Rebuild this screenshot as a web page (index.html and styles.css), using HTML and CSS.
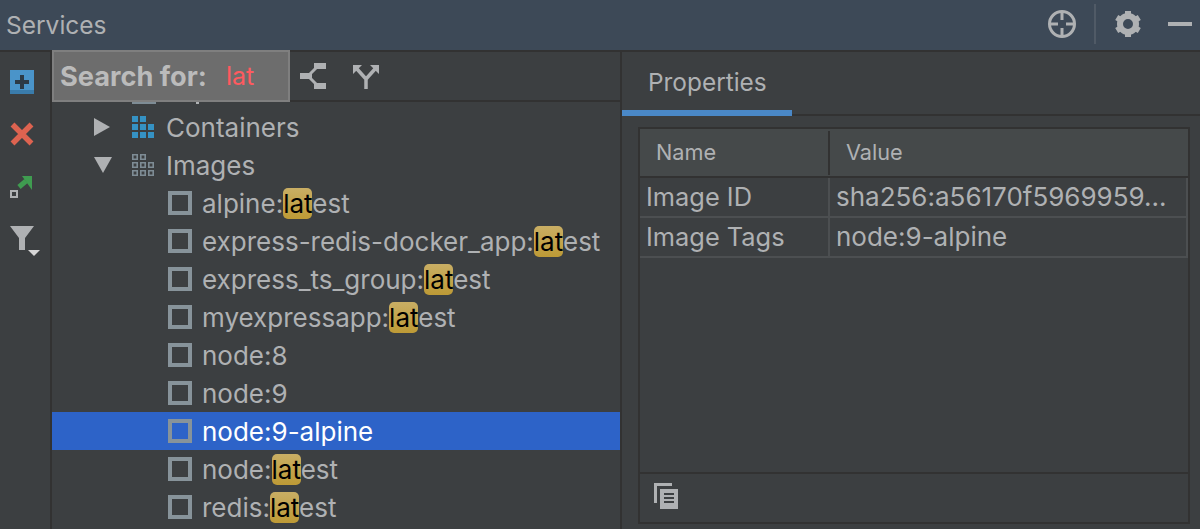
FILE: index.html
```html
<!DOCTYPE html>
<html lang="en">
<head>
<meta charset="utf-8">
<title>Services</title>
<link rel="stylesheet" href="styles.css">
</head>
<body>
<div class="app">
  <header class="titlebar">
    <span class="title">Services</span>
    <div class="title-actions">
      <svg class="ic-target" width="28" height="28" viewBox="0 0 28 28"><circle cx="14" cy="14" r="12.5" fill="none" stroke="#afb1b3" stroke-width="3"/><path d="M14 3v7M14 18v7M3 14h7M18 14h7" stroke="#afb1b3" stroke-width="3" fill="none"/></svg>
      <span class="vsep"></span>
      <svg class="ic-gear" width="26" height="28" viewBox="0 0 26 28"><circle cx="13" cy="14" r="8" fill="none" stroke="#afb1b3" stroke-width="6"/><g stroke="#afb1b3" stroke-width="6"><path d="M13 1v5M13 22v5"/><path d="M1.7 7.5l4.3 2.5M20 18l4.300 2.500"/><path d="M24.300 7.500L20 10M6 18l-4.300 2.500"/></g></svg>
      <span class="minimize"></span>
    </div>
  </header>
  <div class="main">
    <aside class="sidebar">
      <svg class="ic-add" width="24" height="24" viewBox="0 0 24 24"><rect width="24" height="24" fill="#4a94c9"/><rect y="20" width="24" height="4" fill="#3a7cab"/><path d="M12 5v14M5 12h14" stroke="#2c3a46" stroke-width="4"/></svg>
      <svg class="ic-remove" width="24" height="24" viewBox="0 0 24 24"><path d="M2.500 2.500l19 19M21.500 2.500l-19 19" stroke="#dd6350" stroke-width="5.500"/></svg>
      <svg class="ic-open" width="24" height="24" viewBox="0 0 24 24"><rect x="1" y="15" width="6" height="6" fill="none" stroke="#afb1b3" stroke-width="2"/><path d="M9 11l7-6" stroke="#3f9c50" stroke-width="5"/><path d="M12 0h10v14z" fill="#3f9c50"/></svg>
      <svg class="ic-filter" width="30" height="30" viewBox="0 0 30 30"><path d="M0 0h24L15 12v12H9V12z" fill="#afb1b3"/><path d="M18 24h12l-6 6z" fill="#d6d6d6"/></svg>
    </aside>
    <section class="tree-pane">
      <div class="tree-toolbar">
        <svg class="ic-collapse" width="26" height="26" viewBox="0 0 26 26"><path d="M18 3l-8 8M18 23l-8-8" fill="none" stroke="#afb1b3" stroke-width="3"/><path d="M14 0h12v6H14zM14 20h12v6H14zM0 10h12v6H0z" fill="#afb1b3"/></svg>
        <svg class="ic-expand" width="26" height="26" viewBox="0 0 26 26"><path d="M4 6l9 10v10M22 6l-9 10" fill="none" stroke="#afb1b3" stroke-width="3.500"/><path d="M0 2h9L0 11zM26 2h-9l9 9z" fill="#afb1b3"/></svg>
      </div>
      <div class="search-popup"><span class="search-label">Search for:</span><span class="search-query">lat</span></div>
      <div class="tree">
        <div class="row row-stub"><span class="stub-box"></span><span class="stub-tail"></span></div>
        <div class="row row-group">
          <span class="arrow arrow-right"></span>
          <svg class="ic-grid" width="22" height="22" viewBox="0 0 22 22"><path fill="#3592c4" d="M0 0h6v6H0zM8 0h6v6H8zM0 8h6v6H0zM8 8h6v6H8zM16 8h6v6h-6zM0 16h6v6H0zM8 16h6v6H8zM16 16h6v6h-6z"/></svg>
          <span class="label">Containers</span>
        </div>
        <div class="row row-group">
          <span class="arrow arrow-down"></span>
          <svg class="ic-grid" width="22" height="22" viewBox="0 0 22 22"><g fill="none" stroke="#7e8c95" stroke-width="1.600"><path d="M.8.8h4.400v4.400H.8zM8.800.8h4.400v4.400H8.800zM.8 8.800h4.400v4.400H.8zM8.800 8.800h4.400v4.400H8.800zM16.800 8.800h4.400v4.400h-4.400zM.8 16.800h4.400v4.400H.8zM8.800 16.800h4.400v4.400H8.800zM16.800 16.800h4.400v4.400h-4.400z"/></g></svg>
          <span class="label">Images</span>
        </div>
        <div class="row row-leaf"><span class="box"></span><span class="label">alpine:<mark>lat</mark>est</span></div>
        <div class="row row-leaf"><span class="box"></span><span class="label">express-redis-docker_app:<mark>lat</mark>est</span></div>
        <div class="row row-leaf"><span class="box"></span><span class="label">express_ts_group:<mark>lat</mark>est</span></div>
        <div class="row row-leaf"><span class="box"></span><span class="label">myexpressapp:<mark>lat</mark>est</span></div>
        <div class="row row-leaf"><span class="box"></span><span class="label">node:8</span></div>
        <div class="row row-leaf"><span class="box"></span><span class="label">node:9</span></div>
        <div class="row row-leaf selected"><span class="box"></span><span class="label">node:9-alpine</span></div>
        <div class="row row-leaf"><span class="box"></span><span class="label">node:<mark>lat</mark>est</span></div>
        <div class="row row-leaf"><span class="box"></span><span class="label">redis:<mark>lat</mark>est</span></div>
      </div>
    </section>
    <section class="details">
      <div class="tabs"><div class="tab">Properties</div></div>
      <div class="table">
        <div class="thead"><div class="th th-name">Name</div><div class="th th-value">Value</div></div>
        <div class="tr"><div class="td td-name">Image ID</div><div class="td td-value">sha256:a56170f5969959...</div></div>
        <div class="tr"><div class="td td-name">Image Tags</div><div class="td td-value">node:9-alpine</div></div>
        <div class="table-space"></div>
        <div class="table-foot">
          <svg width="24" height="26" viewBox="0 0 24 26"><path fill="#afb1b3" d="M0 0h18v3H3v17H0z"/><path fill="#afb1b3" d="M6 6h18v20H6z"/><path d="M10 10h10v2H10zM10 14h10v2H10zM10 18h10v2H10z" fill="#3c3f41"/></svg>
        </div>
      </div>
    </section>
  </div>
</div>
</body>
</html>
```
FILE: styles.css
```css
* { box-sizing: border-box; }
html, body { margin: 0; height: 100%; overflow: hidden; }
body { background: #3c3f41; color: #afb1b3; font-family: Inter, "Liberation Sans", sans-serif; font-size: 26px; }
.app { width: 1200px; height: 529px; display: flex; flex-direction: column; overflow: hidden; }
.titlebar { height: 52px; flex: none; background: #3d4957; border-bottom: 2px solid #323232; display: flex; align-items: center; justify-content: space-between; padding: 0 8px 2px 6px; }
.title { font-size: 24.500px; color: #afb1b3; margin-top: 2px; }
.title-actions { display: flex; align-items: center; }
.ic-target { margin-right: 18px; }
.vsep { width: 2px; height: 40px; background: #505a66; margin-right: 19px; }
.ic-gear { margin-right: 27px; }
.minimize { width: 24px; height: 4px; background: #afb1b3; }
.main { flex: 1; display: flex; min-height: 0; }
.sidebar { width: 52px; flex: none; border-right: 2px solid #323232; display: flex; flex-direction: column; align-items: flex-start; padding: 18px 0 0 10px; }
.ic-remove { margin-top: 28px; }
.ic-open { margin-top: 30px; }
.ic-filter { margin-top: 26px; }
.tree-pane { width: 570px; flex: none; border-right: 2px solid #323232; position: relative; display: flex; flex-direction: column; }
.tree-toolbar { height: 50px; flex: none; border-bottom: 2px solid #323232; display: flex; align-items: center; padding-left: 248px; gap: 27px; }
.search-popup { position: absolute; left: 0; top: -2px; width: 238px; height: 52px; background: #6d6d6d; border: 2px solid #7f7f7f; display: flex; align-items: center; padding-left: 6px; }
.search-label { font-weight: 700; font-size: 27.200px; color: #bbbbbb; width: 166px; flex: none; white-space: nowrap; }
.search-query { color: #ff5a5f; font-size: 25px; }
.tree { flex: 1; overflow: hidden; min-height: 0; }
.row { height: 38px; display: flex; align-items: center; white-space: nowrap; }
.row-stub { margin-top: -32px; padding: 0 0 4px 80px; align-items: flex-end; }
.stub-box { width: 24px; height: 24px; background: #7e8c95; margin-right: 40px; }
.stub-tail { width: 3px; height: 3px; background: #afb1b3; }
.row-group { padding-left: 42px; }
.arrow { width: 0; height: 0; border-style: solid; border-color: transparent; }
.arrow-right { border-width: 9px 0 9px 16px; border-left-color: #afb1b3; margin-right: 22px; }
.arrow-down { border-width: 16px 9px 0; border-top-color: #afb1b3; margin-right: 20px; }
.ic-grid { margin-right: 12px; }
.row-leaf { padding-left: 116px; }
.box { width: 24px; height: 24px; border: 4px solid #87939a; margin-right: 10px; flex: none; }
mark { background: linear-gradient(#c9ae64, #bd9a36); color: #000; border-radius: 5px; }
.selected { background: #2d63c8; color: #fff; }
.details { flex: 1; display: flex; flex-direction: column; min-width: 0; }
.tabs { height: 64px; flex: none; border-bottom: 2px solid #323232; display: flex; }
.tab { width: 170px; height: 64px; padding: 16px 0 0 26px; border-bottom: 6px solid #4a88c7; font-size: 24.400px; line-height: 28px; }
.table { margin: 11px 0 0 16px; width: 552px; height: 397px; border: 2px solid #323232; display: flex; flex-direction: column; }
.thead { height: 49px; flex: none; display: flex; background: #45494a; border-bottom: 2px solid #323232; font-size: 21.700px; align-items: center; }
.th-name { width: 190px; height: 44px; padding-left: 16px; line-height: 42px; border-right: 2px solid #323232; }
.th-value { height: 44px; line-height: 42px; padding-left: 16px; }
.tr { height: 40px; flex: none; display: flex; border-bottom: 2px solid #4c4f51; }
.td { line-height: 38px; white-space: nowrap; overflow: hidden; }
.td-name { width: 190px; padding-left: 6px; border-right: 2px solid #4c4f51; font-size: 25.400px; }
.td-value { flex: 1; padding-left: 6px; border-right: 2px solid #4c4f51; }
.table-space { flex: 1; }
.table-foot { height: 50px; flex: none; border-top: 2px solid #323232; padding: 9px 0 0 14px; }
```
